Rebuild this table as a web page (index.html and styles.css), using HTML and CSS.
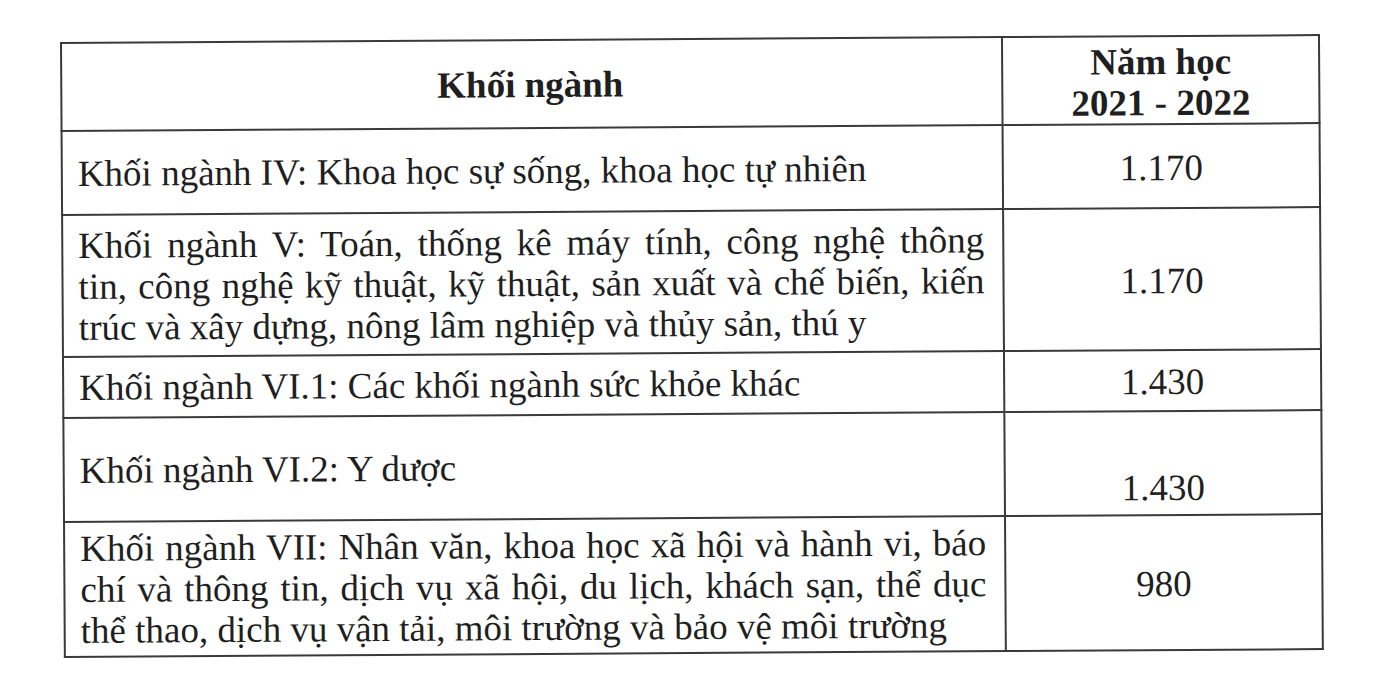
FILE: index.html
```html
<!DOCTYPE html>
<html lang="vi">
<head>
<meta charset="utf-8">
<title>Khối ngành</title>
<link rel="stylesheet" href="styles.css">
</head>
<body>
<div class="page">
<table class="grid">
  <colgroup><col class="c1"><col class="c2"></colgroup>
  <tr class="r-head">
    <th class="name">Khối ngành</th>
    <th class="val">Năm học<br>2021 - 2022</th>
  </tr>
  <tr class="r1">
    <td class="name">Khối ngành IV: Khoa học sự sống, khoa học tự nhiên</td>
    <td class="val">1.170</td>
  </tr>
  <tr class="r2">
    <td class="name">Khối ngành V: Toán, thống kê máy tính, công nghệ thông tin, công nghệ kỹ thuật, kỹ thuật, sản xuất và chế biến, kiến trúc và xây dựng, nông lâm nghiệp và thủy sản, thú y</td>
    <td class="val">1.170</td>
  </tr>
  <tr class="r3">
    <td class="name">Khối ngành VI.1: Các khối ngành sức khỏe khác</td>
    <td class="val">1.430</td>
  </tr>
  <tr class="r4">
    <td class="name">Khối ngành VI.2: Y dược</td>
    <td class="val low">1.430</td>
  </tr>
  <tr class="r5">
    <td class="name">Khối ngành VII: Nhân văn, khoa học xã hội và hành vi, báo chí và thông tin, dịch vụ xã hội, du lịch, khách sạn, thể dục thể thao, dịch vụ vận tải, môi trường và bảo vệ môi trường</td>
    <td class="val">980</td>
  </tr>
</table>
</div>
</body>
</html>
```
FILE: styles.css
```css
html, body {
  margin: 0;
  padding: 0;
  background: #ffffff;
}
.page {
  width: 1390px;
  height: 674px;
  overflow: hidden;
  padding: 42px 0 0 60px;
  box-sizing: border-box;
}
.grid {
  border-collapse: collapse;
  width: 1258px;
  table-layout: fixed;
  font-family: "Liberation Serif", "Times New Roman", serif;
  font-size: 37px;
  line-height: 41px;
  color: #1f1f1f;
  transform: rotate(-0.36deg);
  transform-origin: 0 0;
}
.c1 { width: 941px; }
.c2 { width: 317px; }
.grid th, .grid td {
  border: 2px solid #3a3a3a;
  padding: 0 18px 0 15px;
  vertical-align: middle;
}
.grid th {
  font-weight: bold;
  text-align: center;
}
.grid td.name {
  text-align: justify;
}
.grid .val {
  text-align: center;
  padding: 0;
}
.grid th.val {
  padding-top: 4px;
}
.grid td.val {
  padding-top: 2px;
}
.grid td.low {
  vertical-align: bottom;
  padding-bottom: 6px;
}
.r-head { height: 86px; }
.r1 { height: 84px; }
.r2 { height: 142px; }
.r3 { height: 61px; }
.r4 { height: 104px; }
.r5 { height: 135px; }
```
